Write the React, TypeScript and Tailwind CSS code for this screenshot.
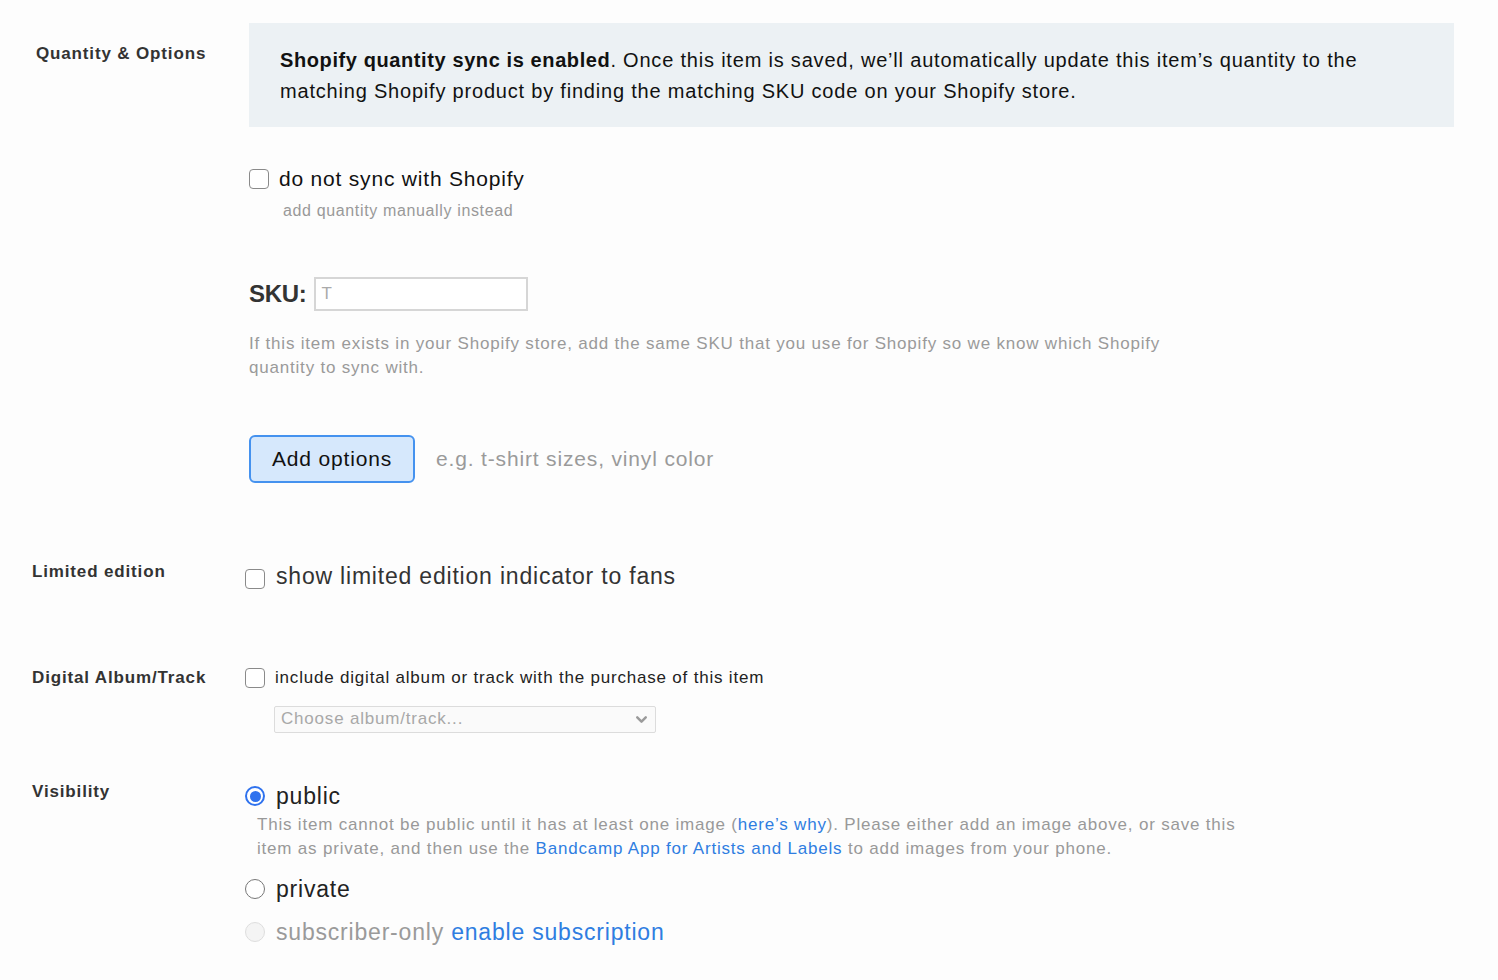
import { ChevronDown } from 'lucide-react';

/**
 * Merch item editor — quantity, limited edition, digital & visibility sections
 */

const Checkbox = ({ className = '' }: { className?: string }) => (
  <span
    className={`inline-block shrink-0 w-[20px] h-[20px] rounded-[4px] border border-[#8a8a8a] bg-white ${className}`}
  />
);

const Radio = ({ checked = false, disabled = false, className = '' }: { checked?: boolean; disabled?: boolean; className?: string }) => {
  if (checked) {
    return (
      <span className={`flex shrink-0 items-center justify-center w-[20px] h-[20px] rounded-full border-2 border-[#2f72ee] bg-white ${className}`}>
        <span className="block w-[11px] h-[11px] rounded-full bg-[#2f72ee]" />
      </span>
    );
  }
  return (
    <span
      className={`inline-block shrink-0 w-[20px] h-[20px] rounded-full border ${
        disabled ? 'border-[#dedede] bg-[#f4f4f4]' : 'border-[#777] bg-white'
      } ${className}`}
    />
  );
};

const Label = ({ children, className = '' }: { children: React.ReactNode; className?: string }) => (
  <div className={`shrink-0 text-[17px] leading-[20px] font-bold text-[#333] tracking-[0.05em] ${className}`}>
    {children}
  </div>
);

const App = () => {
  return (
    <div
      className="min-h-[980px] bg-[#fdfdfd] pl-[32px] pr-[44px] pt-[23px] text-[#222] tracking-[0.05em]"
      style={{ fontFamily: '"Liberation Sans", Arial, sans-serif' }}
    >
      {/* Quantity & Options */}
      <div className="flex">
        <Label className="w-[217px] pl-[4px] mt-[21px]">Quantity &amp; Options</Label>
        <div className="flex-1">
          <div className="bg-[#ecf1f4] pl-[31px] pr-[40px] pt-[22px] pb-[20px] text-[20px] leading-[31px] text-[#111]">
            <strong className="font-bold tracking-[0.03em]">Shopify quantity sync is enabled</strong>. Once this item is
            saved, we’ll automatically update this item’s quantity to the matching Shopify product by finding the
            matching SKU code on your Shopify store.
          </div>

          <div className="mt-[40px] flex items-center gap-[10px] h-[24px]">
            <Checkbox />
            <span className="text-[21px] leading-[24px] text-[#111]">do not sync with Shopify</span>
          </div>
          <div className="mt-[10px] pl-[34px] text-[16px] leading-[20px] text-[#999] tracking-[0.04em]">
            add quantity manually instead
          </div>

          <div className="mt-[56px] flex items-center h-[34px]">
            <span className="text-[24px] font-bold text-[#333] tracking-[-0.3px]">SKU:</span>
            <div className="ml-[8px] w-[214px] h-[34px] border-2 border-[#d6d6d6] bg-white flex items-center pl-[5px] text-[17px] text-[#aaa]">
              T
            </div>
          </div>

          <p className="mt-[21px] max-w-[930px] text-[17px] leading-[24px] text-[#9a9a9a]">
            If this item exists in your Shopify store, add the same SKU that you use for Shopify so we know which
            Shopify quantity to sync with.
          </p>

          <div className="mt-[55px] flex items-center">
            <button className="w-[166px] h-[48px] rounded-[6px] border-2 border-[#4592ef] bg-[#d6e8fc] text-[21px] text-[#111] tracking-[0.04em]">
              Add options
            </button>
            <span className="ml-[21px] text-[21px] text-[#9a9a9a] tracking-[0.04em]">e.g. t-shirt sizes, vinyl color</span>
          </div>
        </div>
      </div>

      {/* Limited edition */}
      <div className="mt-[79px] flex">
        <Label className="w-[213px]">Limited edition</Label>
        <div className="flex items-start gap-[11px]">
          <Checkbox className="mt-[7px]" />
          <span className="text-[23px] leading-[28px] text-[#333]">show limited edition indicator to fans</span>
        </div>
      </div>

      {/* Digital Album/Track */}
      <div className="mt-[78px] flex">
        <Label className="w-[213px]">Digital Album/Track</Label>
        <div>
          <div className="flex items-center gap-[10px] h-[20px]">
            <Checkbox className="w-[19px] h-[19px]" />
            <span className="text-[17px] leading-[20px] text-[#222]">
              include digital album or track with the purchase of this item
            </span>
          </div>
          <div className="mt-[18px] ml-[29px] w-[382px] h-[27px] rounded-[2px] border border-[#dcdcdc] bg-[#fafafa] flex items-center justify-between pl-[6px] pr-[5px]">
            <span className="text-[17px] leading-[20px] text-[#a8a8a8] -mt-[2px]">Choose album/track...</span>
            <ChevronDown size={17} strokeWidth={3.5} className="text-[#9a9a9a]" />
          </div>
        </div>
      </div>

      {/* Visibility */}
      <div className="mt-[49px] flex">
        <Label className="w-[213px]">Visibility</Label>
        <div>
          <div className="flex items-center gap-[11px] h-[28px]">
            <Radio checked />
            <span className="text-[23px] leading-[28px] text-[#222]">public</span>
          </div>
          <p className="mt-[3px] ml-[12px] max-w-[980px] text-[17px] leading-[24px] text-[#999]">
            This item cannot be public until it has at least one image (
            <a className="text-[#2f7de1]">here’s why</a>). Please either add an image above, or save this item as
            private, and then use the <a className="text-[#2f7de1]">Bandcamp App for Artists and Labels</a> to add images
            from your phone.
          </p>
          <div className="mt-[14px] flex items-center gap-[11px] h-[28px]">
            <Radio />
            <span className="text-[23px] leading-[28px] text-[#222]">private</span>
          </div>
          <div className="mt-[15px] flex items-center gap-[11px] h-[28px]">
            <Radio disabled />
            <span className="text-[23px] leading-[28px] text-[#9a9a9a]">
              subscriber-only <a className="text-[#2f7de1]">enable subscription</a>
            </span>
          </div>
        </div>
      </div>
    </div>
  );
};

export default App;
